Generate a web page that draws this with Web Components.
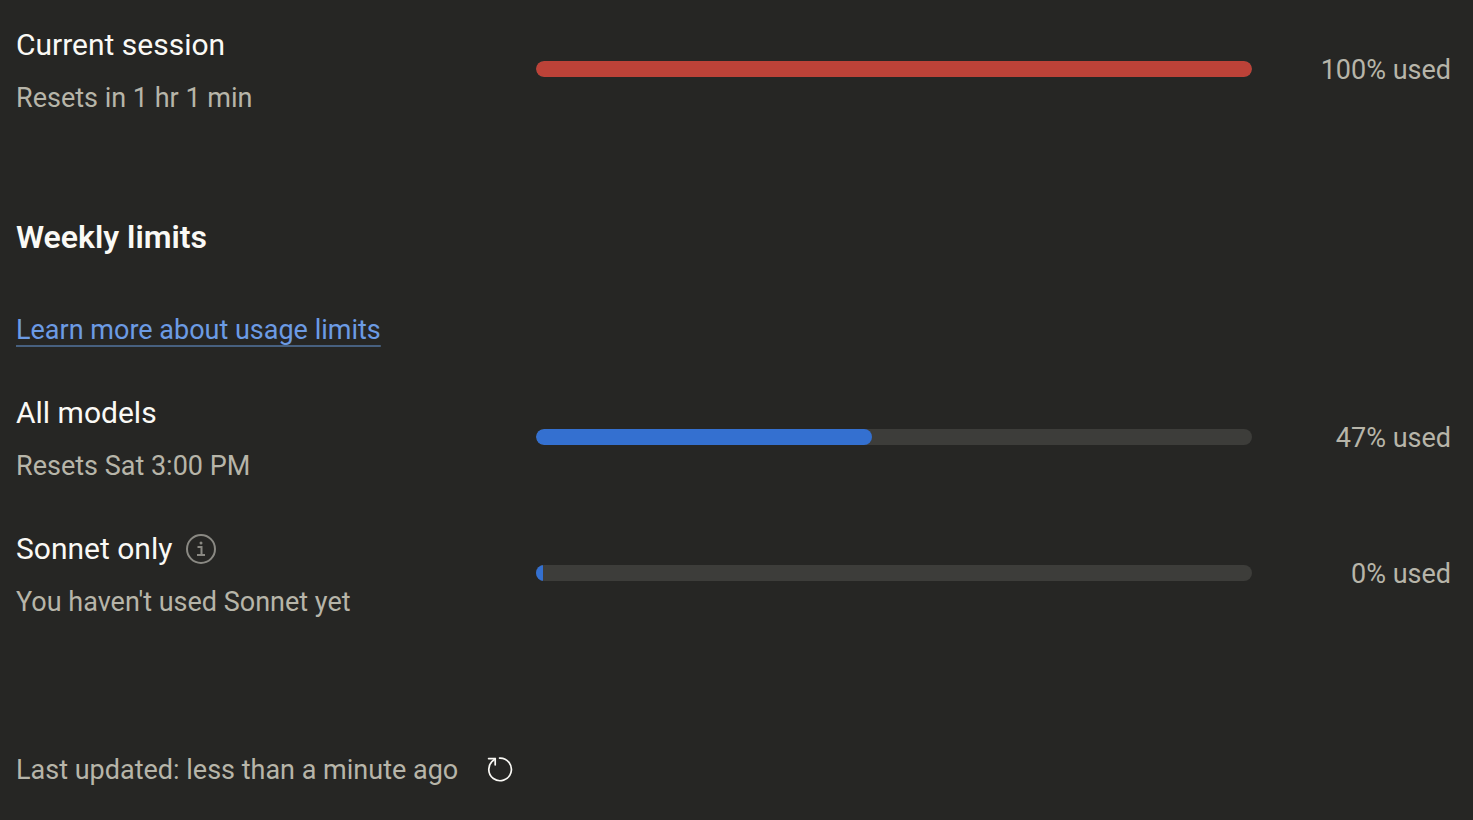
<!DOCTYPE html>
<html lang="en">
<head>
<meta charset="utf-8">
<title>Usage</title>
<style>
body { margin: 0; background: #262624; }
</style>
</head>
<body>
<usage-panel></usage-panel>

<script>
const templateInfoIcon = document.createElement("template");
templateInfoIcon.innerHTML = `
<style>
:host { display: block; width: 32px; height: 32px; }
svg { display: block; }
</style>
<svg width="32" height="32" viewBox="0 0 32 32" fill="none" stroke="#8a8983" stroke-width="2" role="img" aria-label="Info">
    <circle cx="16" cy="16" r="14"/>
    <path d="M12.5 14H16.5V22M12 22H20"/>
    <circle cx="16" cy="10" r="1.5" fill="#8a8983" stroke="none"/>
</svg>
`;

class InfoIcon extends HTMLElement {
  constructor() {
    super();
    this.attachShadow({ mode: "open" });
    this.shadowRoot.appendChild(templateInfoIcon.content.cloneNode(true));
  }
}

const templateRefreshButton = document.createElement("template");
templateRefreshButton.innerHTML = `
<style>
:host { display: block; }
button {
    display: block;
    padding: 0;
    border: 0;
    background: none;
    color: #faf9f5;
    cursor: pointer;
}
svg { display: block; }
</style>
<button type="button" aria-label="Refresh usage">
    <svg width="28" height="28" viewBox="0 0 28 28" fill="none" stroke="currentColor" stroke-width="1.7" stroke-linecap="round" stroke-linejoin="round">
        <path d="M13.6 2.1A11.3 11.3 0 1 1 7.8 4L9.2 2.7"/>
        <path d="M2.6 2.6H9.2V8.8"/>
    </svg>
</button>
`;

class RefreshButton extends HTMLElement {
  constructor() {
    super();
    this.attachShadow({ mode: "open" });
    this.shadowRoot.appendChild(templateRefreshButton.content.cloneNode(true));
  }
}

const templateUsageRow = document.createElement("template");
templateUsageRow.innerHTML = `
<style>
:host {
    display: flex;
    align-items: center;
    gap: 32px;
}
.info {
    flex: 0 0 34%;
    display: flex;
    flex-direction: column;
    gap: 10px;
}
.title {
    display: flex;
    align-items: center;
    gap: 13px;
    color: #faf9f5;
    font-size: 30px;
    line-height: 48px;
}
.note { line-height: 38px; }
.track {
    flex: 1;
    height: 16px;
    border-radius: 8px;
    background: #3d3d3a;
    overflow: hidden;
}
.bar {
    height: 100%;
    background: #3470d0;
}
.bar.round { border-radius: 8px; }
.bar.full { background: #bc4238; }
.used {
    flex: 0 0 167px;
    padding-top: 2px;
    text-align: right;
}
</style>
<div class="info">
    <div class="title"><span id="title"><slot></slot></span><slot name="icon"></slot></div>
    <div class="note"><slot name="note"></slot></div>
</div>
<div class="track" role="progressbar" aria-labelledby="title" aria-valuemin="0" aria-valuemax="100">
    <div class="bar"></div>
</div>
<div class="used"></div>
`;

class UsageRow extends HTMLElement {
  constructor() {
    super();
    this.attachShadow({ mode: "open" });
    this.shadowRoot.appendChild(templateUsageRow.content.cloneNode(true));
  }

  connectedCallback() {
    this._render();
  }

  _render() {
    const value = Number(this.getAttribute("value"));
    const bar = this.shadowRoot.querySelector(".bar");
    // an empty bar still shows a sliver
    bar.style.width = `${Math.max(value, 1)}%`;
    bar.classList.toggle("round", value > 1);
    bar.classList.toggle("full", value >= 100);
    this.shadowRoot.querySelector(".track").setAttribute("aria-valuenow", value);
    this.shadowRoot.querySelector(".used").textContent = `${value}% used`;
  }
}

const templateUsagePanel = document.createElement("template");
templateUsagePanel.innerHTML = `
<style>
:host {
    display: flex;
    flex-direction: column;
    box-sizing: border-box;
    min-height: 100vh;
    padding: 21px 22px 32px 16px;
    font-family: Roboto, "Liberation Sans", sans-serif;
    font-size: 27px;
    line-height: 36px;
    color: #b7b5a9;
}
h2 {
    margin: 100px 0 55px;
    color: #faf9f5;
    font-size: 32px;
    font-weight: 600;
    line-height: 40px;
}
a {
    align-self: flex-start;
    color: #6c9be4;
    text-decoration: underline #47607f 2px;
    text-underline-offset: 6px;
}
.limits {
    display: flex;
    flex-direction: column;
    gap: 40px;
    margin-top: 41px;
}
footer {
    display: flex;
    align-items: center;
    gap: 28px;
    margin-top: 131px;
}
</style>
<usage-row value="100">Current session<span slot="note">Resets in 1 hr 1 min</span></usage-row>
<h2>Weekly limits</h2>
<a href="#">Learn more about usage limits</a>
<div class="limits">
    <usage-row value="47">All models<span slot="note">Resets Sat 3:00 PM</span></usage-row>
    <usage-row value="0">Sonnet only<info-icon slot="icon"></info-icon><span slot="note">You haven't used Sonnet yet</span></usage-row>
</div>
<footer>
    <span>Last updated: less than a minute ago</span>
    <refresh-button></refresh-button>
</footer>
`;

class UsagePanel extends HTMLElement {
  constructor() {
    super();
    this.attachShadow({ mode: "open" });
    this.shadowRoot.appendChild(templateUsagePanel.content.cloneNode(true));
  }
}

window.customElements.define("info-icon", InfoIcon);
window.customElements.define("refresh-button", RefreshButton);
window.customElements.define("usage-row", UsageRow);
window.customElements.define("usage-panel", UsagePanel);
</script>
</body>
</html>
